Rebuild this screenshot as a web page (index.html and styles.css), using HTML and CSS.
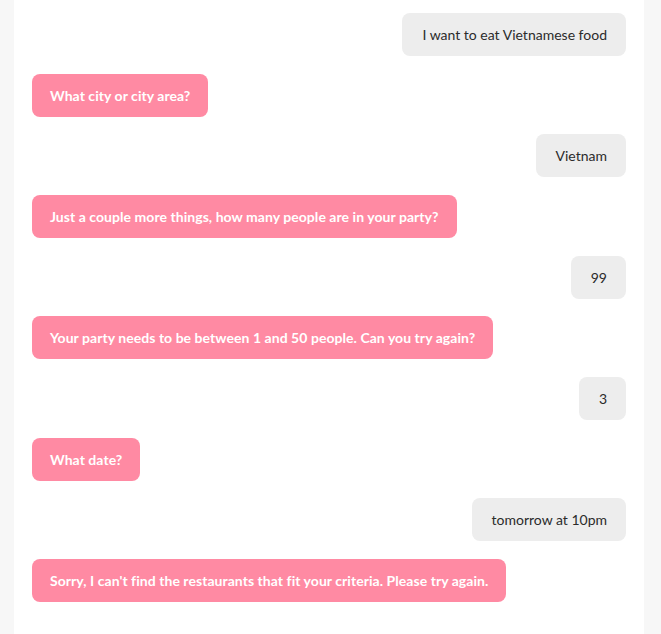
FILE: index.html
```html
<!DOCTYPE html>
<html>
<head>
<meta charset="utf-8">
<link rel="stylesheet" href="styles.css">
</head>
<body>
<div class="panel">
  <div class="msg user"><span class="bubble">I want to eat Vietnamese food</span></div>
  <div class="msg bot"><span class="bubble">What city or city area?</span></div>
  <div class="msg user"><span class="bubble">Vietnam</span></div>
  <div class="msg bot"><span class="bubble">Just a couple more things, how many people are in your party?</span></div>
  <div class="msg user"><span class="bubble">99</span></div>
  <div class="msg bot"><span class="bubble">Your party needs to be between 1 and 50 people. Can you try again?</span></div>
  <div class="msg user"><span class="bubble">3</span></div>
  <div class="msg bot"><span class="bubble">What date?</span></div>
  <div class="msg user"><span class="bubble">tomorrow at 10pm</span></div>
  <div class="msg bot"><span class="bubble">Sorry, I can't find the restaurants that fit your criteria. Please try again.</span></div>
</div>
</body>
</html>
```
FILE: styles.css
```css
html, body {
  margin: 0;
  padding: 0;
  background: #f7f7f7;
  height: 100%;
}
body {
  font-family: Lato, "Open Sans", sans-serif;
  font-size: 14px;
}
.panel {
  margin: 0 17px 0 14px;
  background: #ffffff;
  min-height: 634px;
  padding: 13px 18px 0 18px;
  box-sizing: border-box;
  display: flex;
  flex-direction: column;
  gap: 17.67px;
}
.msg {
  display: flex;
}
.msg.user {
  justify-content: flex-end;
}
.msg.bot {
  justify-content: flex-start;
}
.bubble {
  display: inline-block;
  padding: 12px 18px;
  line-height: 19px;
  border-radius: 8px;
}
.user .bubble {
  background: #ededed;
  color: #2b2b2b;
  padding: 12px 19px 12px 20px;
}
.bot .bubble {
  background: #ff8aa3;
  color: #ffffff;
  font-weight: 700;
  letter-spacing: 0.05px;
}
```
